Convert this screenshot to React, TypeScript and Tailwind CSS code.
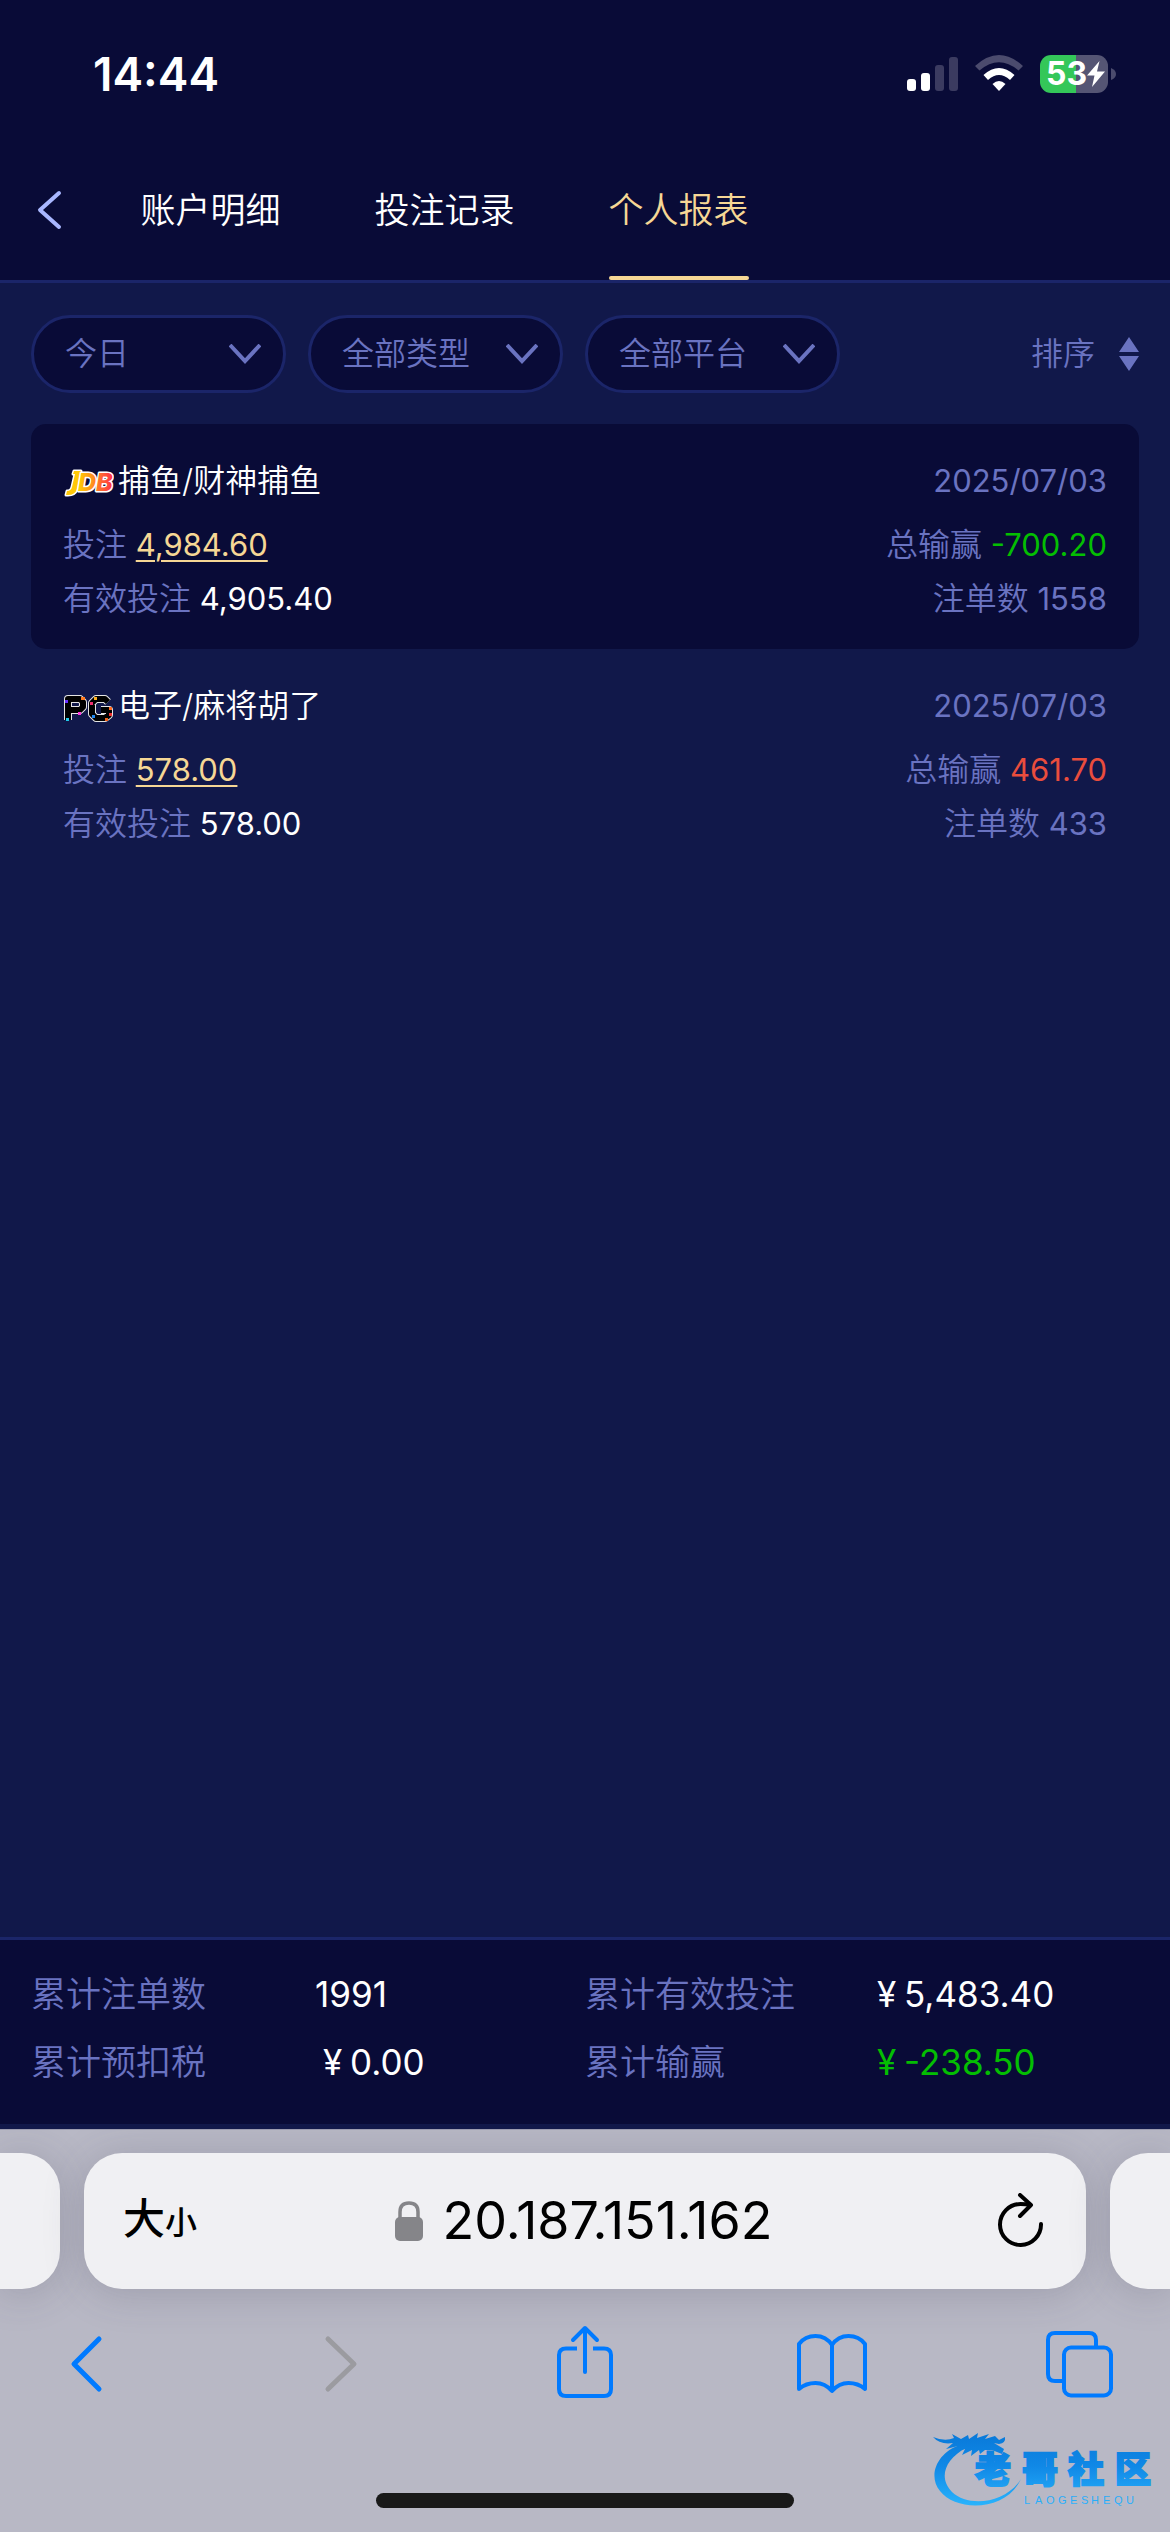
import { useState } from 'react'

interface Report {
  id: string
  logo: 'jdb' | 'pg'
  title: string
  date: string
  bet: string
  validBet: string
  profit: string
  won: boolean
  count: string
}

const tabs = ['账户明细', '投注记录', '个人报表']

const filters = [
  { id: 'date', label: '日期', options: ['今日', '昨日', '近七日'] },
  { id: 'type', label: '类型', options: ['全部类型', '捕鱼', '电子'] },
  { id: 'platform', label: '平台', options: ['全部平台', 'JDB', 'PG'] },
]

const reports: Report[] = [
  {
    id: 'jdb',
    logo: 'jdb',
    title: '捕鱼/财神捕鱼',
    date: '2025/07/03',
    bet: '4,984.60',
    validBet: '4,905.40',
    profit: '-700.20',
    won: false,
    count: '1558',
  },
  {
    id: 'pg',
    logo: 'pg',
    title: '电子/麻将胡了',
    date: '2025/07/03',
    bet: '578.00',
    validBet: '578.00',
    profit: '461.70',
    won: true,
    count: '433',
  },
]

const totals = [
  { label: '累计注单数', value: '1991', money: false, color: 'text-white' },
  { label: '累计有效投注', value: '5,483.40', money: true, color: 'text-white' },
  { label: '累计预扣税', value: '0.00', money: true, color: 'text-white' },
  { label: '累计输赢', value: '-238.50', money: true, color: 'text-[#04be02]' },
]

function StatusBar() {
  return (
    <div className="flex h-[140px] items-start justify-between pt-[46px] pr-[54px] pl-[93px] text-white">
      <span className="text-[46px] leading-[56px] font-semibold">14:44</span>
      <div className="flex items-center gap-[17px] pt-[9px]">
        <svg width="51" height="38" viewBox="0 0 51 38" aria-hidden="true">
          <rect x="0" y="24" width="9" height="12" rx="3" fill="#fff" />
          <rect x="14" y="18" width="9" height="18" rx="3" fill="#fff" />
          <rect x="28" y="10" width="9" height="26" rx="3" fill="#3b3b60" />
          <rect x="42" y="2" width="9" height="34" rx="3" fill="#3b3b60" />
        </svg>
        <svg width="48" height="38" viewBox="0 0 48 38" aria-hidden="true">
          <path d="M0 11 Q24 -11 48 11 L43.500 15.500 Q24 -1 4.500 15.500 Z" fill="#4b4b6d" />
          <path d="M8.500 20 Q24 6 39.500 20 L35 25 Q24 15 13 25 Z" fill="#fff" />
          <path d="M17.500 29 Q24 23 30.500 29 L24 36 Z" fill="#fff" />
        </svg>
        <div className="relative flex h-[38px] w-[76px] items-center">
          <div className="flex h-full w-[68px] items-center overflow-hidden rounded-[11px] bg-[linear-gradient(to_right,#34c759_36px,#555574_36px)] pl-[6px]">
            <span className="text-[32px] leading-[38px] font-bold">53</span>
            <svg width="18" height="26" viewBox="0 0 18 26" aria-hidden="true">
              <path d="M12.500 0 L0 14.500 H7.500 L5 26 L18 10.500 H10 Z" fill="#fff" />
            </svg>
          </div>
          <svg className="ml-[3px]" width="5" height="12" viewBox="0 0 5 12" aria-hidden="true">
            <path d="M0 0 Q5 2 5 6 Q5 10 0 12 Z" fill="#4b4b6d" />
          </svg>
        </div>
      </div>
    </div>
  )
}

function JdbLogo() {
  return (
    <svg width="51" height="52" viewBox="0 0 51 52" role="img" aria-label="JDB">
      <defs>
        <linearGradient id="jdb" x1="0" y1="0" x2="1" y2="0">
          <stop offset="0" stopColor="#ffd000" />
          <stop offset="0.45" stopColor="#ff8a20" />
          <stop offset="1" stopColor="#ff2f4a" />
        </linearGradient>
      </defs>
      <g
        fontFamily="Inter, sans-serif"
        fontStyle="italic"
        fontWeight="800"
        fill="url(#jdb)"
        stroke="#fff"
        strokeWidth="3"
        strokeLinejoin="round"
        paintOrder="stroke"
      >
        <path
          d="M11 16 H18 L14 34 Q12 40 5 40 H3 L4 36 Q8 36 9 32 L12 19 H10 Z"
          fill="#ffc808"
        />
        <text x="15" y="36" fontSize="25">DB</text>
      </g>
    </svg>
  )
}

function PgLogo() {
  return (
    <svg width="51" height="52" viewBox="0 0 51 52" role="img" aria-label="PG">
      <g fill="none" strokeLinejoin="round">
        <path d="M5 40 V19 H17 L20 22 V27 L17 30 H5" stroke="#e4e4e4" strokeWidth="8" />
        <path d="M45 22 L42 19 H33 L29 23 V34 L33 38 H42 L46 35 V30 H38" stroke="#e4e4e4" strokeWidth="8" />
        <path d="M5 40 V19 H17 L20 22 V27 L17 30 H5" stroke="#000" strokeWidth="6" />
        <path d="M45 22 L42 19 H33 L29 23 V34 L33 38 H42 L46 35 V30 H38" stroke="#000" strokeWidth="6" />
      </g>
      <rect x="2" y="20" width="3" height="3" fill="#6a30ff" />
      <rect x="18" y="17" width="4" height="3" fill="#ff7a20" />
      <rect x="15" y="32" width="3" height="3" fill="#ff38e0" />
      <rect x="3" y="38" width="3" height="3" fill="#20c8e8" />
      <rect x="31" y="17" width="3" height="3" fill="#ffb020" />
      <rect x="27" y="22" width="3" height="3" fill="#f03070" />
      <rect x="46" y="27" width="3" height="3" fill="#ff6a20" />
      <rect x="46" y="33" width="3" height="3" fill="#f03030" />
      <rect x="29" y="35" width="3" height="3" fill="#2088f0" />
      <rect x="42" y="38" width="3" height="3" fill="#f06018" />
    </svg>
  )
}

function ReportCard({ report, dark }: { report: Report; dark: boolean }) {
  return (
    <li
      className={`flex h-[225px] flex-col rounded-[15px] px-8 pt-[27px] text-[31px] text-[#6a73c1] ${
        dark ? 'bg-[#090b37]' : ''
      }`}
    >
      <div className="flex h-[60px] items-center justify-between">
        <h2 className="flex items-center gap-1 text-[32px] font-[350] text-white">
          {report.logo === 'jdb' ? <JdbLogo /> : <PgLogo />}
          {report.title}
        </h2>
        <time>{report.date}</time>
      </div>
      <div className="mt-[7px] flex h-[54px] items-center justify-between">
        <p>
          <span className="text-[32px] font-[350]">投注</span>{' '}
          <a href="#bet" className="text-[#f6d795] underline decoration-2 underline-offset-4">
            {report.bet}
          </a>
        </p>
        <p>
          <span className="text-[32px] font-[350]">总输赢</span>{' '}
          <span className={report.won ? 'text-[#ea4d3d]' : 'text-[#04be02]'}>{report.profit}</span>
        </p>
      </div>
      <div className="flex h-[54px] items-center justify-between">
        <p>
          <span className="text-[32px] font-[350]">有效投注</span>{' '}
          <span className="text-white">{report.validBet}</span>
        </p>
        <p>
          <span className="text-[32px] font-[350]">注单数</span> {report.count}
        </p>
      </div>
    </li>
  )
}

function Watermark() {
  return (
    <svg
      className="absolute right-[15px] bottom-[22px]"
      width="223"
      height="80"
      viewBox="0 0 223 80"
      role="img"
      aria-label="老哥社区"
    >
      <defs>
        <linearGradient id="wave" x1="0" y1="0" x2="0" y2="80" gradientUnits="userSpaceOnUse">
          <stop offset="0" stopColor="#0878d8" />
          <stop offset="0.45" stopColor="#1088e6" />
          <stop offset="1" stopColor="#2cb8ff" />
        </linearGradient>
      </defs>
      <g fill="url(#wave)">
        <path d="M28 15 C6 22 -5 45 8 61 C24 82 74 82 89 49 C74 73 37 78 20 62 C6 48 13 29 34 18 Z" />
        <path d="M1 7 Q13 12 22 8 L20 4 L29 9 L36 5 L37 9 L46 3 L45 8 L57 4 L53 9 L63 6 L67 10 L73 7 Q74 13 67 14 L62 13 L72 19 L70 24 L60 20 L53 20 L48 24 L47 20 L39 26 L40 20 L30 25 L33 19 L20 22 L26 16 L14 19 L21 13 Q8 15 1 7 Z" />
        <text
          x="43 90 136 183"
          y="53"
          fontSize="36"
          fontWeight="900"
          fontFamily="'Noto Sans CJK SC', sans-serif"
          stroke="url(#wave)"
          strokeWidth="2"
        >
          老哥社区
        </text>
        <text
          x="92 103 114 126 138 149 159 171 182 194"
          y="74"
          fontSize="11"
          fontFamily="'Liberation Sans', sans-serif"
        >
          LAOGESHEQU
        </text>
      </g>
    </svg>
  )
}

function BrowserBar() {
  return (
    <div className="relative h-[403px] shrink-0 overflow-hidden border-t border-[#9c9cb0] bg-[#b8b8c5] pt-[23px]">
      <div className="flex h-[136px] gap-6">
        <div className="w-[60px] rounded-r-[38px] bg-[#f0f0f3] shadow-[0_4px_40px_rgba(60,60,80,0.22)]" />
        <div className="flex flex-1 items-center justify-between rounded-[38px] bg-[#f0f0f3] pr-[42px] pl-[39px] text-black shadow-[0_4px_40px_rgba(60,60,80,0.22)]">
          <button className="flex w-[74px] items-baseline font-medium" aria-label="页面设置">
            <span className="text-[42px] leading-[56px]">大</span>
            <span className="text-[32px] leading-[56px]">小</span>
          </button>
          <label className="flex items-center gap-[20px]">
            <svg width="28" height="40" viewBox="0 0 28 40" aria-label="安全">
              <path d="M5 18 V11 Q5 2 14 2 Q23 2 23 11 V18" fill="none" stroke="#858589" strokeWidth="3.500" />
              <rect x="0" y="16" width="28" height="24" rx="5" fill="#858589" />
            </svg>
            <input
              className="field-sizing-content bg-transparent text-[52px] leading-[64px] outline-none"
              aria-label="地址"
              defaultValue="20.187.151.162"
            />
          </label>
          <button className="flex w-[74px] justify-end" aria-label="重新载入">
            <svg width="46" height="56" viewBox="0 0 46 56" aria-hidden="true">
              <g fill="none" stroke="#000" strokeWidth="4" strokeLinecap="round" strokeLinejoin="round">
                <path d="M43 31 A20.500 20.500 0 1 1 22.500 11 Q28 11 32 12" />
                <path d="M22 2 L33 12 L22 23" />
              </g>
            </svg>
          </button>
        </div>
        <div className="w-[60px] rounded-l-[38px] bg-[#f0f0f3] shadow-[0_4px_40px_rgba(60,60,80,0.22)]" />
      </div>

      <div className="mt-[35px] flex justify-between px-[51px] text-[#007aff]">
        <button aria-label="后退">
          <svg width="80" height="80" viewBox="0 0 80 80" fill="none" stroke="currentColor" strokeWidth="5" strokeLinecap="round" strokeLinejoin="round">
            <path d="M48 15 L23 40 L48 65" />
          </svg>
        </button>
        <button className="text-[#9b9ba0]" aria-label="前进" disabled>
          <svg width="80" height="80" viewBox="0 0 80 80" fill="none" stroke="currentColor" strokeWidth="5" strokeLinecap="round" strokeLinejoin="round">
            <path d="M30 15 L56 40 L30 65" />
          </svg>
        </button>
        <button aria-label="分享">
          <svg width="80" height="80" viewBox="0 0 80 80" fill="none" stroke="currentColor" strokeWidth="4">
            <path d="M32 24.500 H21 Q14 24.500 14 31 V65 Q14 72 21 72 H59 Q66 72 66 65 V31 Q66 24.500 59 24.500 H48" />
            <path d="M40 48 V5 M28 16 L40 4 L52 16" strokeLinecap="round" strokeLinejoin="round" />
          </svg>
        </button>
        <button aria-label="书签">
          <svg width="80" height="80" viewBox="0 0 80 80" fill="none" stroke="currentColor" strokeWidth="4" strokeLinecap="round" strokeLinejoin="round">
            <path d="M40 21 Q34 12 23.500 12 Q13 12 7 20 V65 Q14 59 23.500 59 Q33 59 40 67 Q47 59 56.500 59 Q66 59 73 65 V20 Q67 12 56.500 12 Q46 12 40 21 Z M40 21 V66" />
          </svg>
        </button>
        <button aria-label="标签页">
          <svg width="80" height="80" viewBox="0 0 80 80" fill="none" stroke="currentColor" strokeWidth="4">
            <path d="M24 57 H16 Q9 57 9 50 V16 Q9 9 16 9 H50 Q57 9 57 16 V23" />
            <rect x="25" y="23.500" width="47" height="48" rx="7" />
          </svg>
        </button>
      </div>

      <div className="mx-auto mt-[89px] h-[15px] w-[418px] rounded-full bg-[#191919]" />
      <Watermark />
    </div>
  )
}

export default function App() {
  const [active, setActive] = useState(2)

  return (
    <div className="flex min-h-screen flex-col bg-[#11184a] font-[Inter,'Noto_Sans_CJK_SC',sans-serif] text-[32px] leading-[48px]">
      <header className="border-b-[3px] border-[#1b2569] bg-[#090b37]">
        <StatusBar />
        <nav className="flex h-[140px] text-[35px] font-[350]">
          <button className="flex w-[8%] items-center pl-[37px]" aria-label="返回">
            <svg width="26" height="40" viewBox="0 0 26 40" fill="none" stroke="#a9b7ff" strokeWidth="4" strokeLinecap="round" strokeLinejoin="round">
              <path d="M22 3 L3 20 L22 37" />
            </svg>
          </button>
          {tabs.map((tab, i) => (
            <button key={tab} className="flex w-1/5 justify-center" onClick={() => setActive(i)}>
              <span
                className={`relative flex h-full items-center ${i === active ? 'text-[#f6d795]' : 'text-white'}`}
              >
                {tab}
                {i === active && <span className="absolute inset-x-0 bottom-0 h-1 rounded-full bg-[#f6d795]" />}
              </span>
            </button>
          ))}
        </nav>
      </header>

      <main className="flex-1 px-[31px] pt-8 text-[#6a73c1]">
        <div className="flex items-center gap-[22px]">
          {filters.map((filter) => (
            <div key={filter.id} className="relative w-[255px]">
              <select
                aria-label={filter.label}
                className="h-[78px] w-full appearance-none rounded-full border-[3px] border-[#1b2569] bg-[#090b37] pl-[31px] font-[350]"
              >
                {filter.options.map((option) => (
                  <option key={option}>{option}</option>
                ))}
              </select>
              <svg
                className="pointer-events-none absolute top-[29px] right-[25px]"
                width="32"
                height="20"
                viewBox="0 0 32 20"
                fill="none"
                stroke="currentColor"
                strokeWidth="4"
                aria-hidden="true"
              >
                <path d="M1 1 L16 17 L31 1" />
              </svg>
            </div>
          ))}
          <button className="ml-auto flex items-center gap-6 font-[350]">
            排序
            <svg width="20" height="34" viewBox="0 0 20 34" fill="currentColor" aria-hidden="true">
              <path d="M10 0 L20 15 H0 Z M10 34 L20 19 H0 Z" />
            </svg>
          </button>
        </div>

        <ul className="mt-[31px]">
          {reports.map((report, i) => (
            <ReportCard key={report.id} report={report} dark={i % 2 === 0} />
          ))}
        </ul>
      </main>

      <footer className="border-t-[3px] border-b-[5px] border-t-[#1b2569] border-b-[#11184a] bg-[#090b37] px-[31px] pt-5 pb-[28px]">
        <dl className="grid grid-cols-2 text-[35px]">
          {totals.map((item) => (
            <div key={item.label} className="flex h-[68px] items-center">
              <dt className="w-[284px] font-[350] text-[#6a73c1]">{item.label}</dt>
              <dd className={item.color}>
                {item.money && <span className="inline-block w-[35px] text-center">¥</span>}
                {item.value}
              </dd>
            </div>
          ))}
        </dl>
      </footer>

      <BrowserBar />
    </div>
  )
}
